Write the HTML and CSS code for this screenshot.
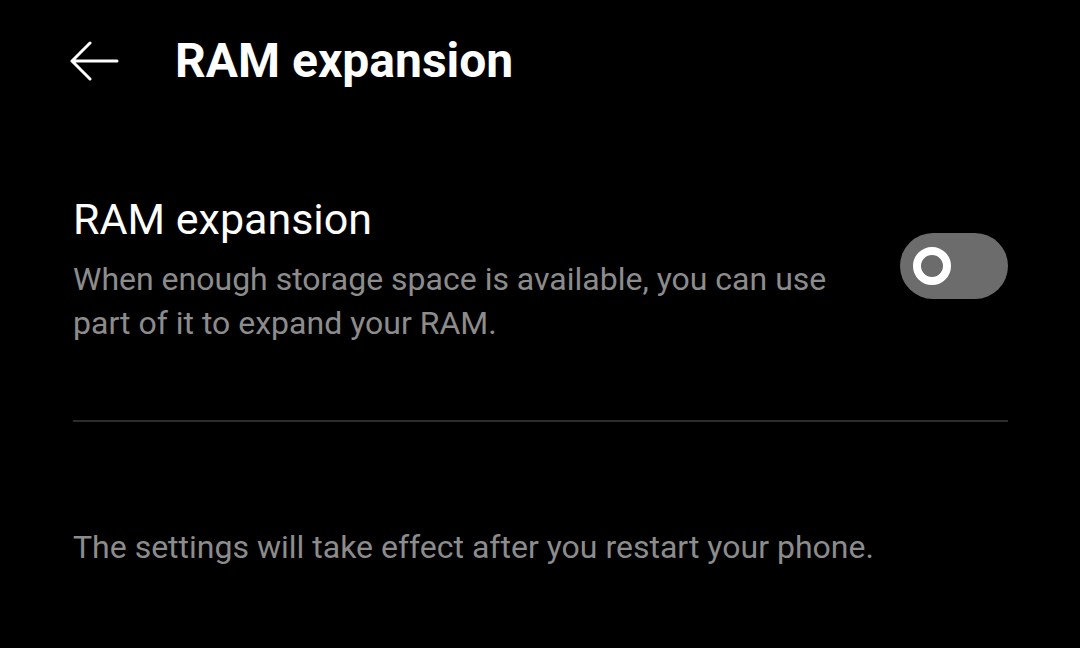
FILE: index.html
```html
<!DOCTYPE html>
<html>
<head>
<meta charset="utf-8">
<link rel="stylesheet" href="styles.css">
</head>
<body>
<div class="page">
  <header class="topbar">
    <svg class="back" width="50" height="40" viewBox="0 0 50 40">
      <path d="M48 20 H3 M21 2 L3 20 L21 38" fill="none" stroke="#fff" stroke-width="3" stroke-linecap="round" stroke-linejoin="round"/>
    </svg>
    <h1 class="title">RAM expansion</h1>
  </header>
  <section class="setting">
    <div class="setting-text">
      <div class="setting-title">RAM expansion</div>
      <div class="setting-desc">When enough storage space is available, you can use part of it to expand your RAM.</div>
    </div>
    <div class="toggle"><span class="knob"></span></div>
  </section>
  <div class="divider"></div>
  <p class="note">The settings will take effect after you restart your phone.</p>
</div>
</body>
</html>
```
FILE: styles.css
```css
html, body {
  margin: 0;
  padding: 0;
  background: #000;
  width: 1080px;
  height: 648px;
  overflow: hidden;
}
body {
  font-family: Roboto, "Noto Sans", sans-serif;
  color: #fff;
}
.page {
  padding: 0 72px 0 73px;
}
.topbar {
  display: flex;
  align-items: center;
  height: 122px;
}
.back {
  margin-left: -4px;
  margin-right: 56px;
  display: block;
}
.title {
  margin: 0;
  font-size: 48px;
  line-height: 56px;
  font-weight: 700;
}
.setting {
  display: flex;
  align-items: flex-start;
  justify-content: space-between;
  padding-top: 69px;
}
.setting-text {
  width: 790px;
}
.setting-title {
  font-size: 43px;
  line-height: 56px;
  margin-bottom: 10px;
}
.setting-desc {
  font-size: 32px;
  line-height: 44px;
  color: #8c8c8c;
}
.toggle {
  width: 108px;
  height: 66px;
  border-radius: 33px;
  background: #6c6c6c;
  position: relative;
  flex: none;
  margin-top: 42px;
}
.knob {
  position: absolute;
  left: 13px;
  top: 14px;
  width: 22px;
  height: 22px;
  border: 8px solid #fff;
  border-radius: 50%;
}
.divider {
  height: 1.5px;
  background: #2c2c2c;
  margin-top: 75px;
}
.note {
  margin: 103px 0 0 0;
  font-size: 32px;
  line-height: 44px;
  color: #8c8c8c;
}
```
